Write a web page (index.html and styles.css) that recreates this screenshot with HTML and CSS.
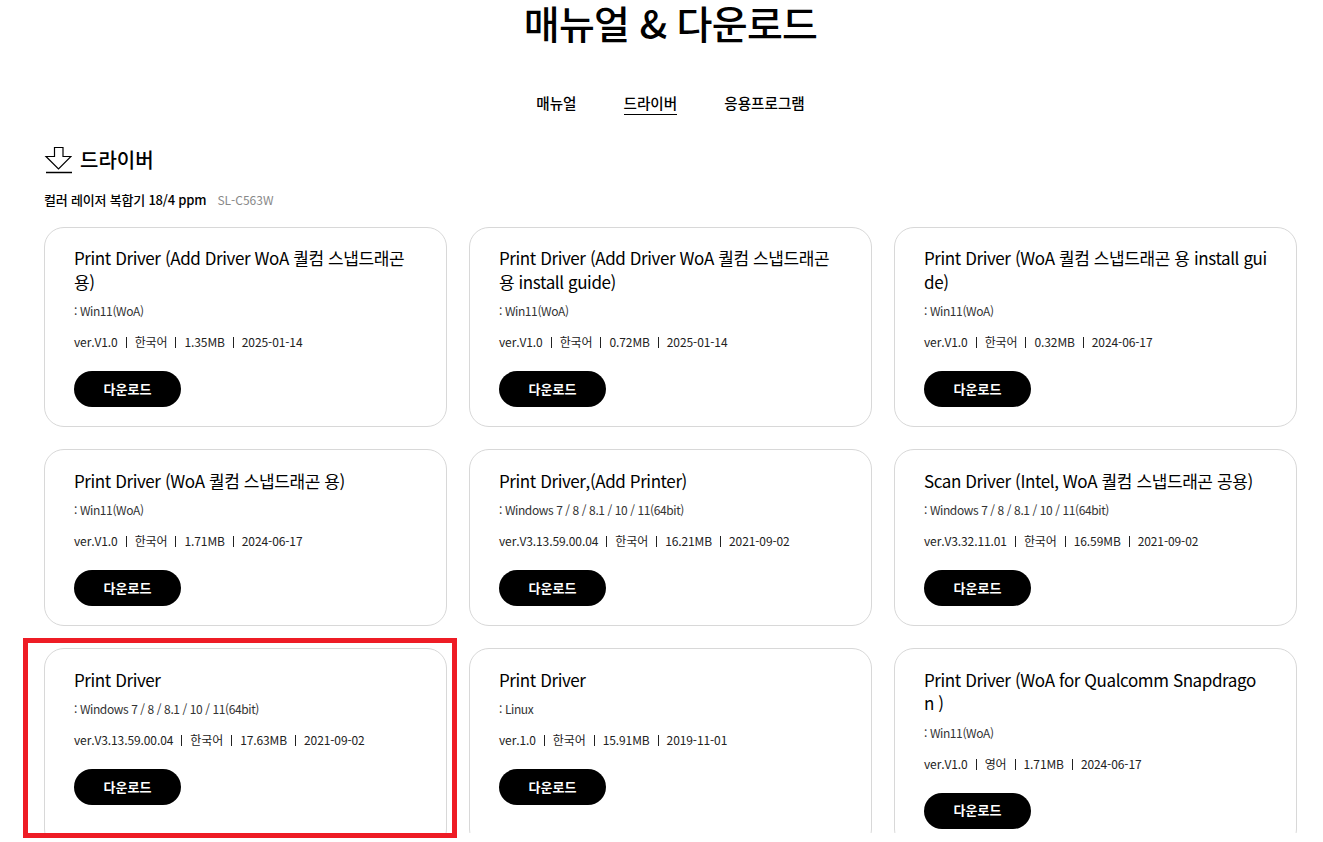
FILE: index.html
```html
<!DOCTYPE html>
<html lang="ko">
<head>
    <meta charset="utf-8">
    <title>매뉴얼 &amp; 다운로드</title>
    <link rel="stylesheet" href="styles.css">
</head>
<body>
    <div class="viewport">
        <h1 class="page-title">매뉴얼 &amp; 다운로드</h1>
        <div class="tabs">
            <a class="tab">매뉴얼</a>
            <a class="tab active">드라이버</a>
            <a class="tab">응용프로그램</a>
        </div>
        <h2 class="section-title">
            <svg class="section-icon" width="28" height="28" viewBox="0 0 28 28" fill="none" stroke="#000" stroke-width="1.2">
                <path d="M10.5 1.5H19V10.5H27L14.5 23L2 10.5H10.5Z"/>
                <path d="M2 26.5H28" stroke-width="1.5"/>
            </svg>
            드라이버
        </h2>
        <p class="product"><b>컬러 레이저 복합기 18/4 ppm</b><span class="model">SL-C563W</span></p>

        <div class="cards">
            <div class="card">
                <h3>Print Driver (Add Driver WoA 퀄컴 스냅드래곤 용)</h3>
                <p class="os">: Win11(WoA)</p>
                <p class="meta"><span>ver.V1.0</span><span>한국어</span><span>1.35MB</span><span>2025-01-14</span></p>
                <button class="download">다운로드</button>
            </div>
            <div class="card">
                <h3>Print Driver (Add Driver WoA 퀄컴 스냅드래곤 용 install guide)</h3>
                <p class="os">: Win11(WoA)</p>
                <p class="meta"><span>ver.V1.0</span><span>한국어</span><span>0.72MB</span><span>2025-01-14</span></p>
                <button class="download">다운로드</button>
            </div>
            <div class="card">
                <h3>Print Driver (WoA 퀄컴 스냅드래곤 용 install guide)</h3>
                <p class="os">: Win11(WoA)</p>
                <p class="meta"><span>ver.V1.0</span><span>한국어</span><span>0.32MB</span><span>2024-06-17</span></p>
                <button class="download">다운로드</button>
            </div>
            <div class="card">
                <h3>Print Driver (WoA 퀄컴 스냅드래곤 용)</h3>
                <p class="os">: Win11(WoA)</p>
                <p class="meta"><span>ver.V1.0</span><span>한국어</span><span>1.71MB</span><span>2024-06-17</span></p>
                <button class="download">다운로드</button>
            </div>
            <div class="card">
                <h3>Print Driver,(Add Printer)</h3>
                <p class="os">: Windows 7 / 8 / 8.1 / 10 / 11(64bit)</p>
                <p class="meta"><span>ver.V3.13.59.00.04</span><span>한국어</span><span>16.21MB</span><span>2021-09-02</span></p>
                <button class="download">다운로드</button>
            </div>
            <div class="card">
                <h3>Scan Driver (Intel, WoA 퀄컴 스냅드래곤 공용)</h3>
                <p class="os">: Windows 7 / 8 / 8.1 / 10 / 11(64bit)</p>
                <p class="meta"><span>ver.V3.32.11.01</span><span>한국어</span><span>16.59MB</span><span>2021-09-02</span></p>
                <button class="download">다운로드</button>
            </div>
            <div class="card">
                <h3>Print Driver</h3>
                <p class="os">: Windows 7 / 8 / 8.1 / 10 / 11(64bit)</p>
                <p class="meta"><span>ver.V3.13.59.00.04</span><span>한국어</span><span>17.63MB</span><span>2021-09-02</span></p>
                <button class="download">다운로드</button>
            </div>
            <div class="card">
                <h3>Print Driver</h3>
                <p class="os">: Linux</p>
                <p class="meta"><span>ver.1.0</span><span>한국어</span><span>15.91MB</span><span>2019-11-01</span></p>
                <button class="download">다운로드</button>
            </div>
            <div class="card">
                <h3>Print Driver (WoA for Qualcomm Snapdrago<br>n )</h3>
                <p class="os">: Win11(WoA)</p>
                <p class="meta"><span>ver.V1.0</span><span>영어</span><span>1.71MB</span><span>2024-06-17</span></p>
                <button class="download">다운로드</button>
            </div>
        </div>
    </div>
    <div class="highlight"></div>
</body>
</html>
```

FILE: styles.css
```css
html, body {
    margin: 0;
    padding: 0;
    background-color: #fff;
}

body {
    position: relative;
    height: 842px;
    overflow: hidden;
    font-family: "Noto Sans CJK KR", "Noto Sans", sans-serif;
    color: #000;
}

.viewport {
    height: 833px;
    overflow: hidden;
    padding: 0 26px 0 44px;
    box-sizing: border-box;
}

.page-title {
    margin: 0;
    font-size: 39px;
    line-height: 44px;
    font-weight: 500;
    text-align: center;
    letter-spacing: -0.7px;
}

.tabs {
    display: flex;
    justify-content: center;
    gap: 47px;
    margin-top: 47px;
}

.tab {
    font-size: 14.6px;
    line-height: 24px;
    font-weight: 500;
    height: 24px;
    box-sizing: border-box;
}

.tab.active {
    border-bottom: 1px solid #000;
}

.section-title {
    display: flex;
    align-items: center;
    gap: 8px;
    margin: 29px 0 0;
    font-size: 20px;
    line-height: 32px;
    font-weight: 500;
}

.product {
    margin: 14px 0 0;
    font-size: 13px;
    line-height: 20px;
    letter-spacing: -0.2px;
}

.product b {
    font-weight: 500;
}

.model {
    margin-left: 11px;
    font-size: 12px;
    color: #888;
    letter-spacing: 0;
}

.cards {
    display: grid;
    grid-template-columns: repeat(3, 403px);
    column-gap: 22px;
    row-gap: 22px;
    margin-top: 16.6px;
}

.card {
    border: 1px solid #d8d8d8;
    border-radius: 20px;
    padding: 18.5px 29px 19px;
}

.card h3 {
    margin: 0;
    font-size: 17px;
    line-height: 23.5px;
    font-weight: 400;
    letter-spacing: -0.4px;
    word-break: break-all;
}

.os {
    margin: 8px 0 0;
    font-size: 12px;
    line-height: 20px;
    letter-spacing: -0.4px;
    color: #333;
}

.meta {
    display: flex;
    margin: 11px 0 0;
    font-size: 12px;
    line-height: 20px;
    letter-spacing: -0.1px;
    color: #222;
}

.meta span + span {
    margin-left: 8px;
    padding-left: 9px;
    position: relative;
}

.meta span + span::before {
    content: "";
    position: absolute;
    left: 0;
    top: 5px;
    height: 11px;
    border-left: 1px solid #222;
}

.download {
    display: block;
    width: 107px;
    height: 36px;
    margin-top: 19px;
    padding: 0 0 2px;
    border: none;
    border-radius: 18px;
    background-color: #000;
    color: #fff;
    font-family: inherit;
    font-size: 13px;
    font-weight: 700;
}

.highlight {
    position: absolute;
    left: 23px;
    top: 638px;
    width: 434px;
    height: 200px;
    box-sizing: border-box;
    border: 5px solid #ee1c25;
}
```
